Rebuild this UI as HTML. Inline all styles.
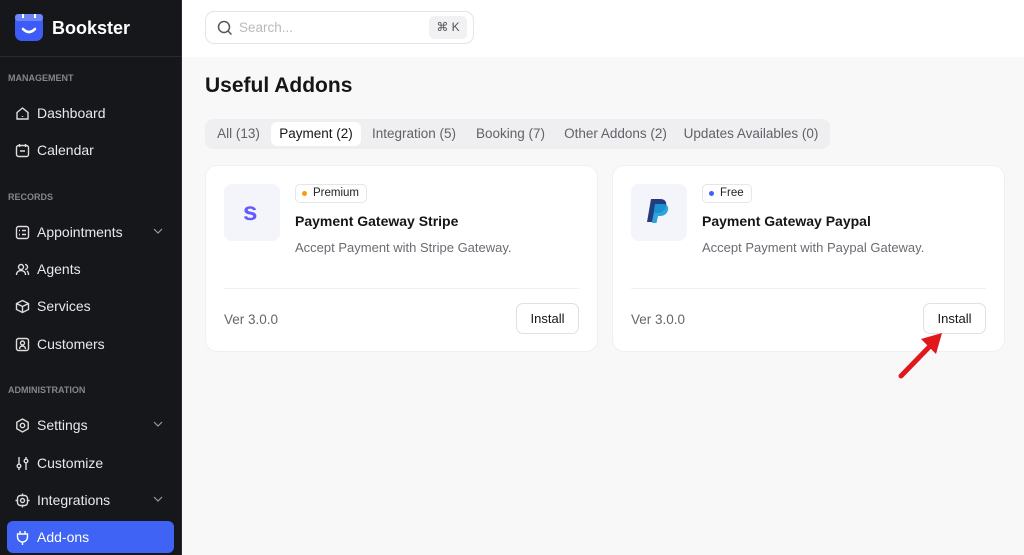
<!DOCTYPE html>
<html><head><meta charset="utf-8"><style>
*{box-sizing:border-box;margin:0;padding:0}
body{width:1024px;height:555px;overflow:hidden;font-family:"Liberation Sans",sans-serif;background:#f8f8f9;position:relative}
.sb{position:absolute;left:0;top:0;width:182px;height:555px;background:#16171b;border-right:1px solid #2a2b30}
.sbh{height:57px;border-bottom:1px solid #2a2b30;position:relative}
.logo{position:absolute;left:15px;top:14px;width:28px;height:27px;background:#3d5cf7;border-radius:7px}
.brand{position:absolute;left:52px;top:18px;color:#fff;font-weight:bold;font-size:18px}
.sec{position:absolute;left:8px;font-size:9px;font-weight:bold;color:#85868c}
.it{position:absolute;left:7px;width:167px;height:32px;color:#e9e9ec;font-size:14px;line-height:32px;padding-left:30px}
.it svg{position:absolute;left:8px;top:9px}
.it .ch{position:absolute;left:146px;top:12px}
.act{background:#3e63f5;border-radius:6px;color:#fff}
.top{position:absolute;left:182px;top:0;right:0;height:57px;background:#fff}
.search{position:absolute;left:205px;top:11px;width:269px;height:33px;border:1px solid #e4e4e7;border-radius:9px;background:#fff}
.kbd{position:absolute;left:223px;top:4px;width:38px;height:23px;background:#f1f1f3;border-radius:5px;font-size:12px;color:#555;text-align:center;line-height:23px}
h1{position:absolute;left:205px;top:74px;font-size:21px;font-weight:bold;color:#161618}
.tabs{position:absolute;left:205px;top:119px;width:625px;height:30px;background:#efeff1;border-radius:8px}
.tab{position:absolute;top:3px;height:24px;line-height:24px;font-size:13.5px;color:#606268;white-space:nowrap;text-align:center}
.tab.on{background:#fff;color:#161618;border-radius:6px}
.card{position:absolute;top:165px;width:393px;height:187px;background:#fff;border-radius:12px;border:1px solid #f0f0f2}
.lg{position:absolute;left:18px;top:18px;width:56px;height:57px;background:#f4f5fa;border-radius:8px}
.badge{position:absolute;left:89px;top:18px;height:19px;border:1px solid #e6e6e9;border-radius:5px;font-size:11.5px;line-height:17px;padding:0 7px 0 17px;color:#222}
.badge i{position:absolute;left:6px;top:6px;width:5px;height:5px;border-radius:50%}
.tt{position:absolute;left:89px;top:47px;font-size:14px;font-weight:bold;color:#161618}
.ds{position:absolute;left:89px;top:74px;font-size:13px;color:#6b6c72}
.dv{position:absolute;left:18px;right:18px;top:122px;border-top:1px solid #f0f0f2}
.ver{position:absolute;left:18px;top:146px;font-size:13.5px;color:#666}
.btn{position:absolute;right:18px;top:137px;width:63px;height:31px;border:1px solid #e1e1e5;border-radius:7px;font-size:13px;text-align:center;line-height:29px;color:#161618;background:#fff}
</style></head><body>
<div class="sb">
<div class="sbh"><div class="logo"><svg width="28" height="27" viewBox="0 0 28 27"><rect x="0" y="0" width="28" height="7" rx="3" fill="#6d87fb"/><path d="M8 15 Q14 21 20 15" stroke="#fff" stroke-width="2.6" fill="none" stroke-linecap="round"/><rect x="7" y="0" width="2" height="4" fill="#fff"/><rect x="19" y="0" width="2" height="4" fill="#fff"/></svg></div><div class="brand">Bookster</div></div>
<div class="sec" style="top:73px">MANAGEMENT</div>
<div class="it" style="top:97px"><svg width="15" height="15" viewBox="0 0 15 15" fill="none" stroke="#ddd" stroke-width="1.4"><path d="M2 6.5L7.5 2 13 6.5V13H2Z"/><path d="M7.5 10v1"/></svg>Dashboard</div>
<div class="it" style="top:134px"><svg width="15" height="15" viewBox="0 0 15 15" fill="none" stroke="#ddd" stroke-width="1.4"><rect x="1.5" y="2.5" width="12" height="11" rx="2"/><path d="M4.5 1v3M10.5 1v3M5 8h5"/></svg>Calendar</div>
<div class="sec" style="top:192px">RECORDS</div>
<div class="it" style="top:216px"><svg width="15" height="15" viewBox="0 0 15 15" fill="none" stroke="#ddd" stroke-width="1.4"><rect x="1.5" y="1.5" width="12" height="12" rx="2"/><path d="M4 5.5h1M7 5.5h4M4 9.5h1M7 9.5h4"/></svg>Appointments<svg class="ch" width="10" height="6" viewBox="0 0 10 6" fill="none" stroke="#999" stroke-width="1.2"><path d="M1 1l4 4 4-4"/></svg></div>
<div class="it" style="top:253px"><svg width="15" height="15" viewBox="0 0 15 15" fill="none" stroke="#ddd" stroke-width="1.4"><circle cx="6" cy="5" r="2.5"/><path d="M1.5 13c0-3 2-4.5 4.5-4.5s4.5 1.5 4.5 4.5M10 2.5a2.5 2.5 0 010 5M12 9c1 .6 1.5 2 1.5 4"/></svg>Agents</div>
<div class="it" style="top:290px"><svg width="15" height="15" viewBox="0 0 15 15" fill="none" stroke="#ddd" stroke-width="1.4"><path d="M7.5 1.5l6 3v6l-6 3-6-3v-6zM1.5 4.5l6 3 6-3M7.5 7.5v6"/></svg>Services</div>
<div class="it" style="top:328px"><svg width="15" height="15" viewBox="0 0 15 15" fill="none" stroke="#ddd" stroke-width="1.4"><rect x="1.5" y="1.5" width="12" height="12" rx="2"/><circle cx="7.5" cy="6" r="2"/><path d="M4.5 12c0-2 1.5-3 3-3s3 1 3 3"/></svg>Customers</div>
<div class="sec" style="top:385px">ADMINISTRATION</div>
<div class="it" style="top:409px"><svg width="15" height="15" viewBox="0 0 15 15" fill="none" stroke="#ddd" stroke-width="1.4"><path d="M7.5 1l5.7 3.3v6.4L7.5 14l-5.7-3.3V4.3z"/><circle cx="7.5" cy="7.5" r="2.2"/></svg>Settings<svg class="ch" width="10" height="6" viewBox="0 0 10 6" fill="none" stroke="#999" stroke-width="1.2"><path d="M1 1l4 4 4-4"/></svg></div>
<div class="it" style="top:447px"><svg width="15" height="15" viewBox="0 0 15 15" fill="none" stroke="#ddd" stroke-width="1.4"><path d="M4 1v7M4 12v2M11 1v2M11 7v7"/><circle cx="4" cy="10" r="1.8"/><circle cx="11" cy="5" r="1.8"/></svg>Customize</div>
<div class="it" style="top:484px"><svg width="15" height="15" viewBox="0 0 15 15" fill="none" stroke="#ddd" stroke-width="1.4"><rect x="2.5" y="2.5" width="10" height="10" rx="3"/><circle cx="7.5" cy="7.5" r="2"/><path d="M7.5 0.5v2M7.5 12.5v2M0.5 7.5h2M12.5 7.5h2"/></svg>Integrations<svg class="ch" width="10" height="6" viewBox="0 0 10 6" fill="none" stroke="#999" stroke-width="1.2"><path d="M1 1l4 4 4-4"/></svg></div>
<div class="it act" style="top:521px"><svg width="15" height="15" viewBox="0 0 15 15" fill="none" stroke="#fff" stroke-width="1.4"><path d="M5 1v3M10 1v3M2.5 4h10v3a5 5 0 01-10 0zM7.5 12v3"/></svg>Add-ons</div>
</div>
<div class="top"></div>
<div class="search"><svg style="position:absolute;left:11px;top:8px" width="16" height="16" viewBox="0 0 16 16" fill="none" stroke="#555" stroke-width="1.5"><circle cx="7" cy="7" r="5.5"/><path d="M11 11l3.5 3.5"/></svg><span style="position:absolute;left:33px;top:8px;font-size:13.5px;color:#b8b9be">Search...</span><div class="kbd">⌘ K</div></div>
<h1>Useful Addons</h1>
<div class="tabs">
<div class="tab" style="left:3px;width:61px">All (13)</div>
<div class="tab on" style="left:66px;width:90px">Payment (2)</div>
<div class="tab" style="left:158px;width:102px">Integration (5)</div>
<div class="tab" style="left:262px;width:87px">Booking (7)</div>
<div class="tab" style="left:351px;width:119px">Other Addons (2)</div>
<div class="tab" style="left:472px;width:148px">Updates Availables (0)</div>
</div>
<div class="card" style="left:205px"><div class="lg"><span style="position:absolute;left:19px;top:12px;font-size:26px;font-weight:bold;color:#635bff">s</span></div><div class="badge"><i style="background:#f59e0b"></i>Premium</div><div class="tt">Payment Gateway Stripe</div><div class="ds">Accept Payment with Stripe Gateway.</div><div class="dv"></div><div class="ver">Ver 3.0.0</div><div class="btn">Install</div></div>
<div class="card" style="left:612px"><div class="lg"><svg style="position:absolute;left:16px;top:14px" width="24" height="28" viewBox="0 0 24 28"><path d="M4 1h9c5 0 7 3 6 7-1 5-5 7-9 7H7l-2 9H0z" fill="#253b80"/><path d="M8 6h8c4 0 6 3 5 6-1 4-4 6-8 6h-2l-1.5 7H5z" fill="#179bd7" opacity=".9"/></svg></div><div class="badge"><i style="background:#3e63f5"></i>Free</div><div class="tt">Payment Gateway Paypal</div><div class="ds">Accept Payment with Paypal Gateway.</div><div class="dv"></div><div class="ver">Ver 3.0.0</div><div class="btn">Install</div></div>
<svg style="position:absolute;left:890px;top:325px" width="60" height="60" viewBox="0 0 60 60"><path d="M11 51L45 16" stroke="#e0181b" stroke-width="5" stroke-linecap="round"/><path d="M52 8L31 14L46 29Z" fill="#e0181b"/></svg>
</body></html>
